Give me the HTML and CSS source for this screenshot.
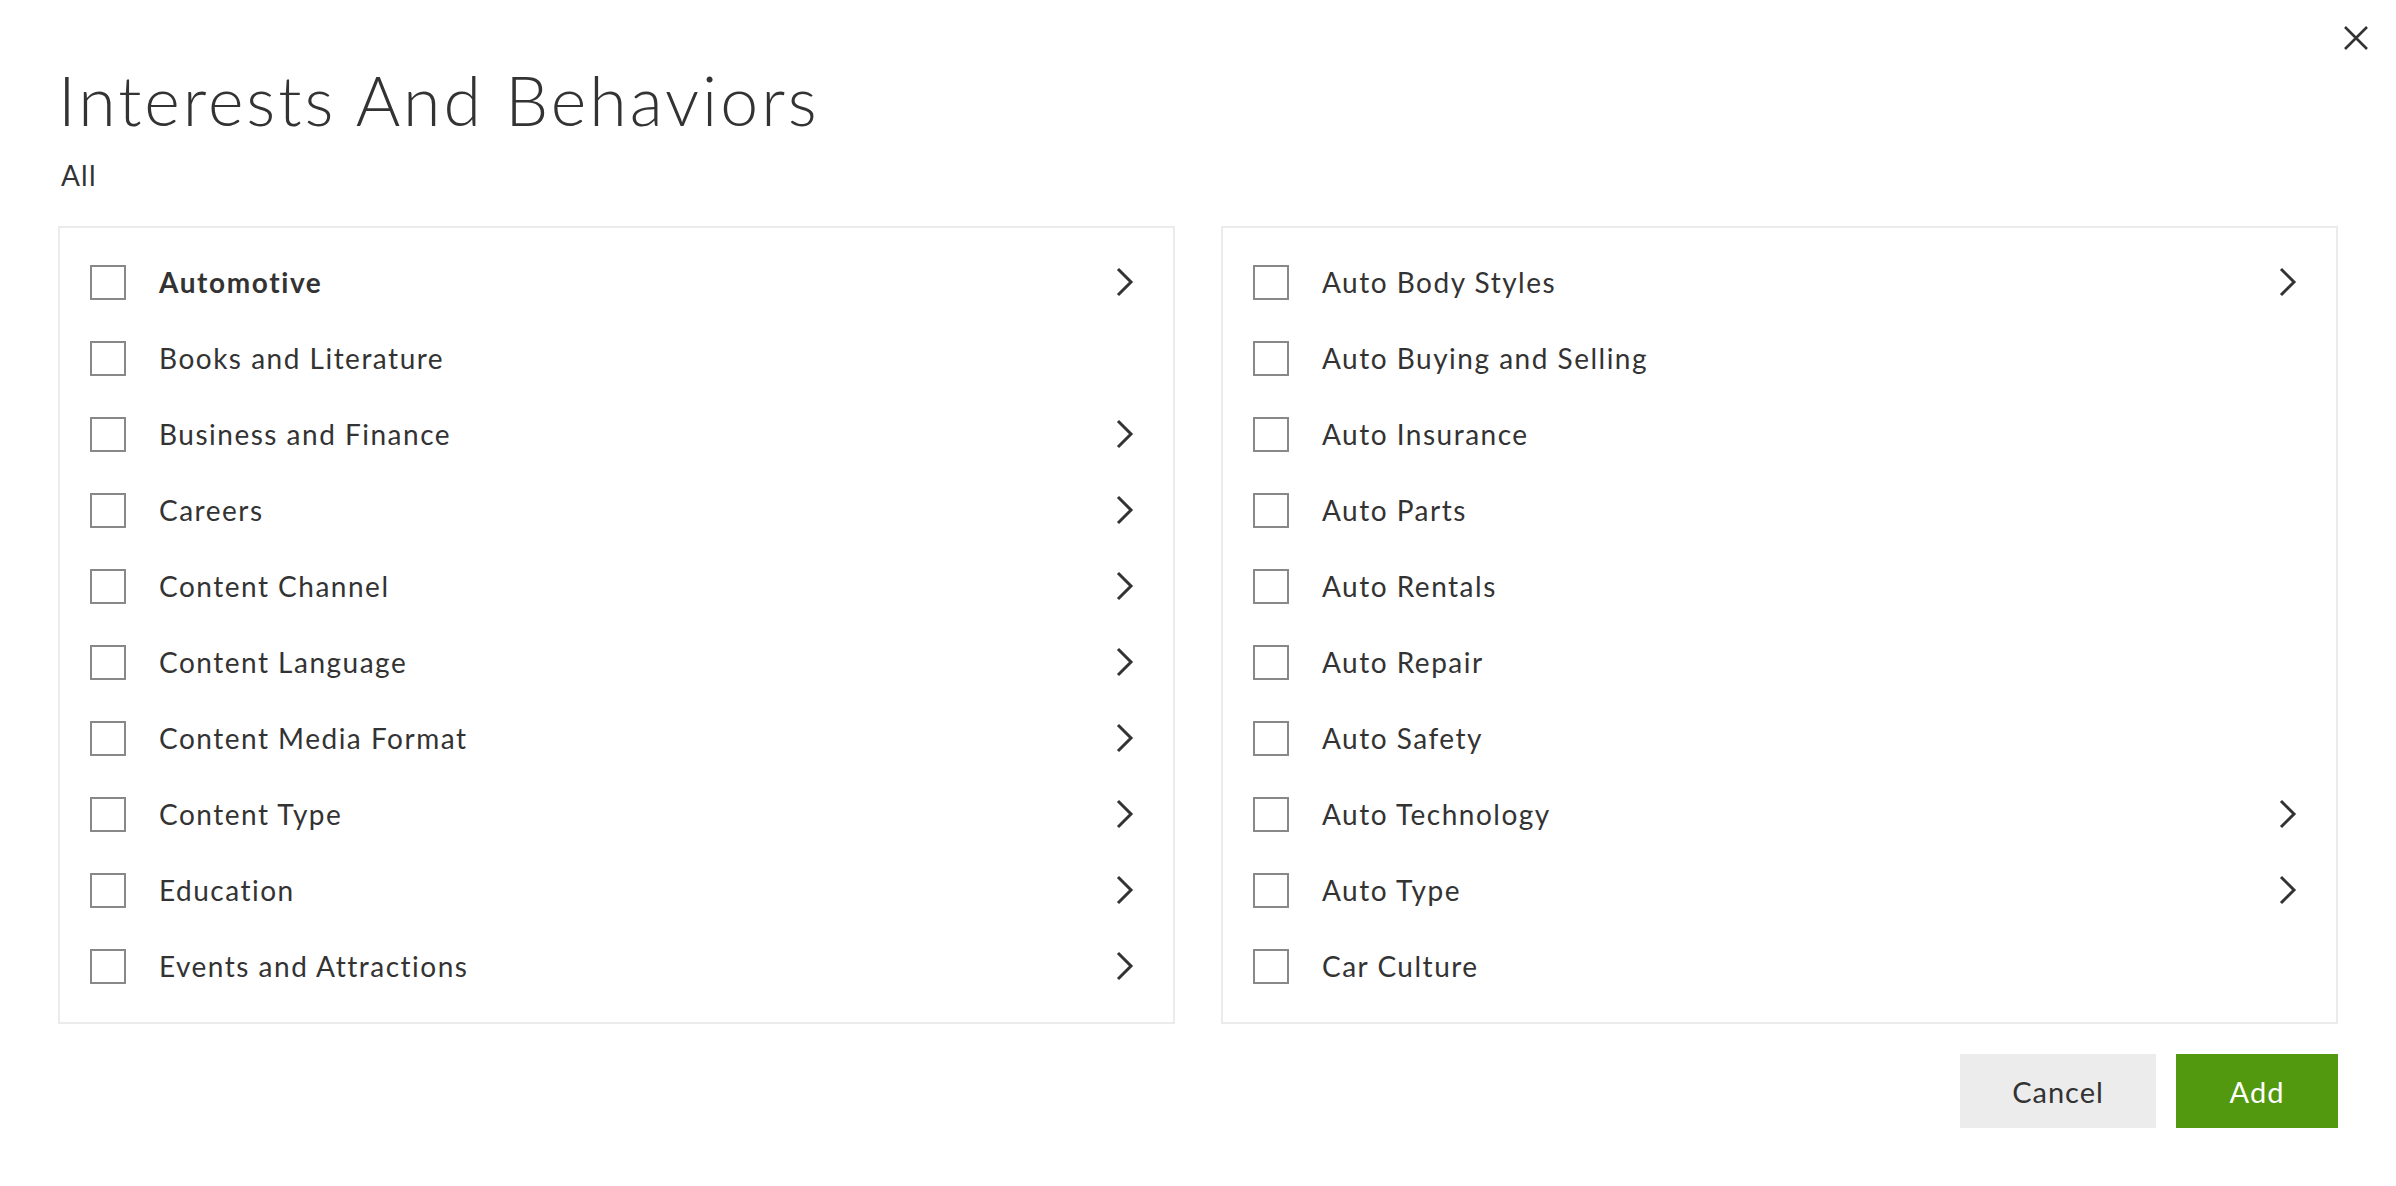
FILE: index.html
```html
<!DOCTYPE html>
<html lang="en">
<head>
<meta charset="utf-8">
<title>Interests And Behaviors</title>
<link rel="stylesheet" href="styles.css">
</head>
<body>
<div class="modal">
  <button class="close" aria-label="Close">
    <svg width="26" height="26" viewBox="0 0 26 26"><path d="M2 2 L24 24 M24 2 L2 24" stroke="#333" stroke-width="2.6" fill="none"/></svg>
  </button>
  <h1 class="title">Interests And Behaviors</h1>
  <div class="crumb">All</div>
  <div class="panels">
    <ul class="panel">
      <li class="row"><span class="box"></span><span class="label bold">Automotive</span><svg class="chev" viewBox="0 0 18 30"><polyline points="2,2 15,15 2,28"/></svg></li>
      <li class="row"><span class="box"></span><span class="label">Books and Literature</span></li>
      <li class="row"><span class="box"></span><span class="label">Business and Finance</span><svg class="chev" viewBox="0 0 18 30"><polyline points="2,2 15,15 2,28"/></svg></li>
      <li class="row"><span class="box"></span><span class="label">Careers</span><svg class="chev" viewBox="0 0 18 30"><polyline points="2,2 15,15 2,28"/></svg></li>
      <li class="row"><span class="box"></span><span class="label">Content Channel</span><svg class="chev" viewBox="0 0 18 30"><polyline points="2,2 15,15 2,28"/></svg></li>
      <li class="row"><span class="box"></span><span class="label">Content Language</span><svg class="chev" viewBox="0 0 18 30"><polyline points="2,2 15,15 2,28"/></svg></li>
      <li class="row"><span class="box"></span><span class="label">Content Media Format</span><svg class="chev" viewBox="0 0 18 30"><polyline points="2,2 15,15 2,28"/></svg></li>
      <li class="row"><span class="box"></span><span class="label">Content Type</span><svg class="chev" viewBox="0 0 18 30"><polyline points="2,2 15,15 2,28"/></svg></li>
      <li class="row"><span class="box"></span><span class="label">Education</span><svg class="chev" viewBox="0 0 18 30"><polyline points="2,2 15,15 2,28"/></svg></li>
      <li class="row"><span class="box"></span><span class="label">Events and Attractions</span><svg class="chev" viewBox="0 0 18 30"><polyline points="2,2 15,15 2,28"/></svg></li>
    </ul>
    <ul class="panel">
      <li class="row"><span class="box"></span><span class="label">Auto Body Styles</span><svg class="chev" viewBox="0 0 18 30"><polyline points="2,2 15,15 2,28"/></svg></li>
      <li class="row"><span class="box"></span><span class="label">Auto Buying and Selling</span></li>
      <li class="row"><span class="box"></span><span class="label">Auto Insurance</span></li>
      <li class="row"><span class="box"></span><span class="label">Auto Parts</span></li>
      <li class="row"><span class="box"></span><span class="label">Auto Rentals</span></li>
      <li class="row"><span class="box"></span><span class="label">Auto Repair</span></li>
      <li class="row"><span class="box"></span><span class="label">Auto Safety</span></li>
      <li class="row"><span class="box"></span><span class="label">Auto Technology</span><svg class="chev" viewBox="0 0 18 30"><polyline points="2,2 15,15 2,28"/></svg></li>
      <li class="row"><span class="box"></span><span class="label">Auto Type</span><svg class="chev" viewBox="0 0 18 30"><polyline points="2,2 15,15 2,28"/></svg></li>
      <li class="row"><span class="box"></span><span class="label">Car Culture</span></li>
    </ul>
  </div>
  <div class="actions">
    <button class="btn cancel">Cancel</button>
    <button class="btn add">Add</button>
  </div>
</div>
</body>
</html>
```
FILE: styles.css
```css
* { box-sizing: border-box; }
html, body { margin: 0; padding: 0; background: #fff; }
body {
  font-family: Lato, "Open Sans", "Liberation Sans", sans-serif;
  color: #333;
}
.modal {
  position: relative;
  padding: 60px 58px 0 58px;
}
.close {
  position: absolute;
  top: 25px;
  right: 27px;
  width: 26px;
  height: 26px;
  padding: 0;
  border: 0;
  background: none;
  display: block;
}
.close svg { display: block; }
.title {
  margin: 0;
  font-weight: 300;
  font-size: 68px;
  line-height: 80px;
  letter-spacing: 3px;
  color: #333;
}
.crumb {
  margin-top: 18px;
  font-size: 28px;
  line-height: 34px;
  letter-spacing: 1.2px;
  padding-left: 3px;
}
.panels {
  margin-top: 34px;
  display: grid;
  grid-template-columns: 1fr 1fr;
  column-gap: 46px;
}
.panel {
  list-style: none;
  margin: 0;
  padding: 16px 39px 18px 30px;
  border: 2px solid #ebebeb;
}
.row {
  height: 76px;
  display: flex;
  align-items: center;
}
.box {
  width: 36px;
  height: 35px;
  border: 2px solid #888;
  flex: none;
}
.label {
  margin-left: 33px;
  font-size: 28px;
  line-height: 34px;
  letter-spacing: 1.5px;
  flex: 1;
}
.label.bold { font-weight: 700; letter-spacing: 1.6px; }
.chev {
  width: 18px;
  height: 30px;
  flex: none;
}
.chev polyline {
  fill: none;
  stroke: #333;
  stroke-width: 3;
}
.actions {
  margin-top: 30px;
  display: flex;
  justify-content: flex-end;
  gap: 20px;
}
.btn {
  height: 74px;
  border: 0;
  border-radius: 0;
  font-family: Lato, "Open Sans", "Liberation Sans", sans-serif;
  font-size: 29px;
  letter-spacing: 1px;
  padding: 0;
}
.cancel {
  width: 196px;
  background: #ececec;
  color: #333;
}
.add {
  width: 162px;
  background: #53990f;
  color: #fff;
}
```
